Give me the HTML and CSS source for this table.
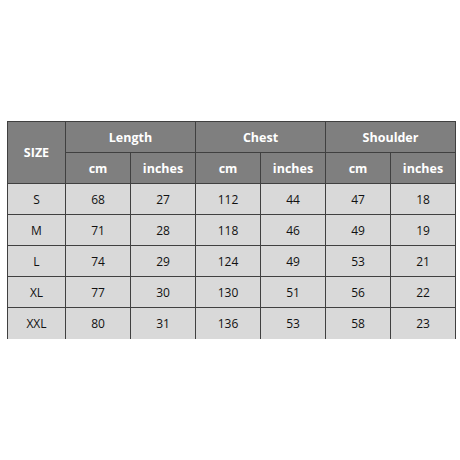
FILE: index.html
```html
<!DOCTYPE html>
<html>
<head>
<meta charset="utf-8">
<link rel="stylesheet" href="styles.css">
</head>
<body>
<div class="page">
<table class="chart">
  <colgroup>
    <col class="c-size"><col class="c-v"><col class="c-v"><col class="c-v"><col class="c-v"><col class="c-v"><col class="c-v">
  </colgroup>
  <thead>
    <tr>
      <th rowspan="2">SIZE</th>
      <th colspan="2">Length</th>
      <th colspan="2">Chest</th>
      <th colspan="2">Shoulder</th>
    </tr>
    <tr>
      <th>cm</th><th>inches</th><th>cm</th><th>inches</th><th>cm</th><th>inches</th>
    </tr>
  </thead>
  <tbody>
    <tr><td>S</td><td>68</td><td>27</td><td>112</td><td>44</td><td>47</td><td>18</td></tr>
    <tr><td>M</td><td>71</td><td>28</td><td>118</td><td>46</td><td>49</td><td>19</td></tr>
    <tr><td>L</td><td>74</td><td>29</td><td>124</td><td>49</td><td>53</td><td>21</td></tr>
    <tr><td>XL</td><td>77</td><td>30</td><td>130</td><td>51</td><td>56</td><td>22</td></tr>
    <tr><td>XXL</td><td>80</td><td>31</td><td>136</td><td>53</td><td>58</td><td>23</td></tr>
  </tbody>
</table>
</div>
</body>
</html>
```
FILE: styles.css
```css
html, body {
  margin: 0;
  padding: 0;
  background: #ffffff;
}
.page {
  width: 460px;
  height: 460px;
  padding: 121px 0 0 7px;
  box-sizing: border-box;
}
.chart {
  border-collapse: collapse;
  table-layout: fixed;
  width: 447px;
  font-family: "Open Sans", "Noto Sans", sans-serif;
  font-size: 12px;
}
.c-size { width: 58px; }
.c-v { width: 65px; }
.chart th, .chart td {
  border: 1px solid #404040;
  height: 31px;
  padding: 0;
  text-align: center;
  vertical-align: middle;
  box-sizing: border-box;
}
.chart th {
  background: #7f7f7f;
  color: #ffffff;
  font-weight: 700;
  font-size: 12.5px;
}
.chart td {
  background: #d9d9d9;
  color: #111111;
}
.chart tbody tr:last-child td {
  border-bottom: none;
}
```
